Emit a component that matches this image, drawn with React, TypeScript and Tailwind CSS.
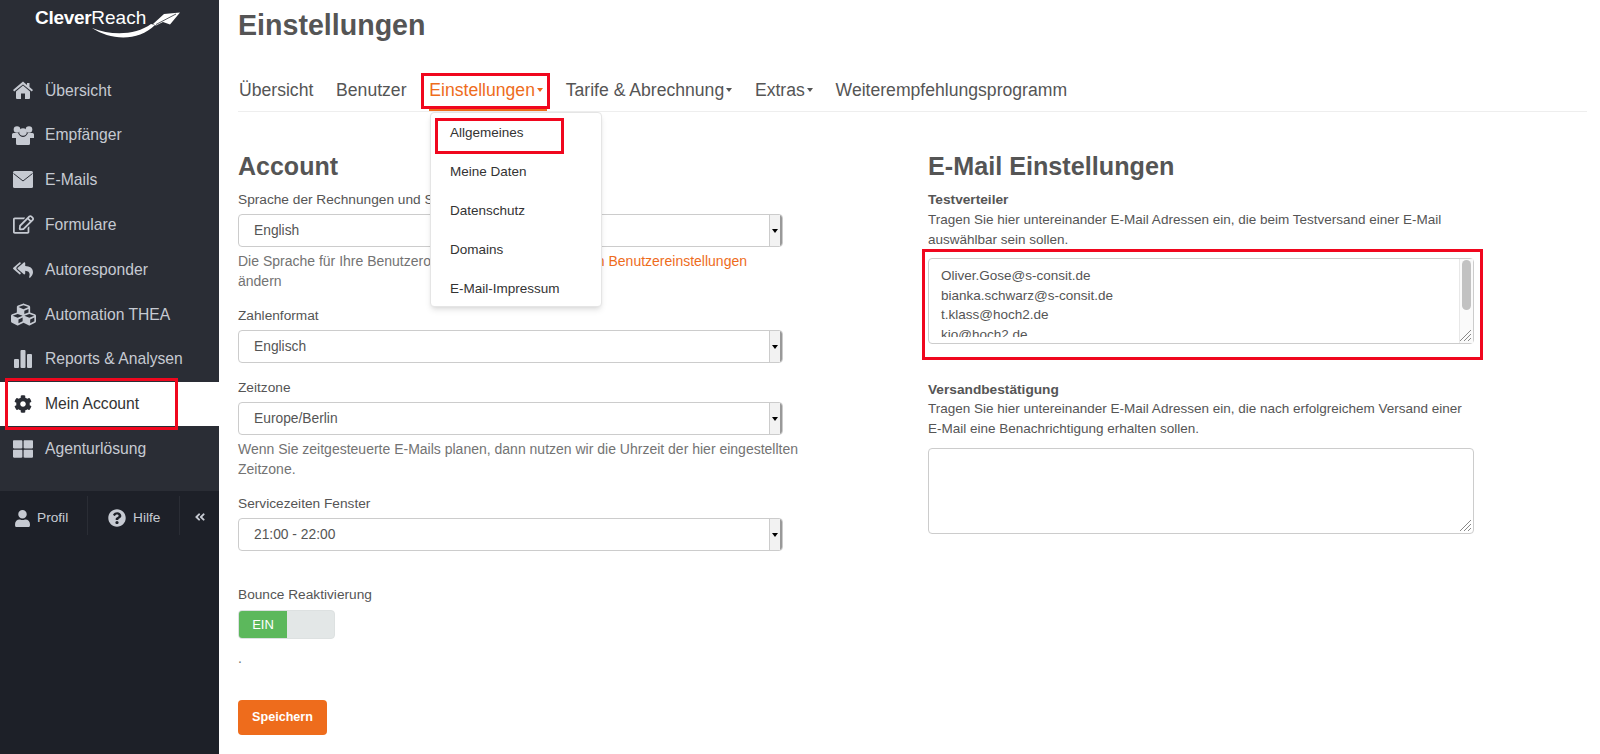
import { FaRegEdit, FaReplyAll, FaCubes, FaCog, FaThLarge, FaUser, FaQuestionCircle, FaAngleDoubleLeft } from "react-icons/fa"
import type { ReactNode } from "react"

function HomeIcon() {
  return (
    <svg width="20" height="18" viewBox="0 0 20 18" fill="currentColor" aria-hidden="true">
      <path d="M10 0.5 L14 3.9 V2 H16.5 V6 L20 9 L18.8 10.6 L10 3.4 L1.2 10.6 L0 9 Z" />
      <path d="M10 4.6 L17 10.4 V17 Q17 18 16 18 H12 V12.5 H8 V18 H4 Q3 18 3 17 V10.4 Z" />
    </svg>
  )
}

function UsersIcon() {
  return (
    <svg width="22" height="19" viewBox="0 0 22 19" fill="currentColor" aria-hidden="true">
      <circle cx="5" cy="3.5" r="3.3" />
      <circle cx="17" cy="3.5" r="3.3" />
      <circle cx="11" cy="6" r="3.8" />
      <path d="M1.5 7 H6 Q8 11 11 11 Q14 11 16 7 H20.5 Q22 7 22 8.5 V12 H18 V17.5 Q18 19 16.5 19 H5.5 Q4 19 4 17.5 V12 H0 V8.5 Q0 7 1.5 7 Z" />
    </svg>
  )
}

function MailIcon() {
  return (
    <svg width="20" height="17" viewBox="0 0 20 17" aria-hidden="true">
      <rect width="20" height="17" rx="1.5" fill="currentColor" />
      <path d="M0.5 2.5 L10 10 L19.5 2.5" fill="none" stroke="#2a2d35" strokeWidth="1" />
    </svg>
  )
}

function BarsIcon() {
  return (
    <svg width="20" height="20" viewBox="0 0 20 20" fill="currentColor" aria-hidden="true">
      <rect x="1" y="10" width="5" height="9" rx="1" />
      <rect x="7.5" y="1" width="5" height="18" rx="1" />
      <rect x="14" y="5" width="5" height="14" rx="1" />
    </svg>
  )
}

const navItems = [
  { label: "Übersicht", icon: <HomeIcon /> },
  { label: "Empfänger", icon: <UsersIcon /> },
  { label: "E-Mails", icon: <MailIcon /> },
  { label: "Formulare", icon: <FaRegEdit size={21} /> },
  { label: "Autoresponder", icon: <FaReplyAll size={20} /> },
  { label: "Automation THEA", icon: <FaCubes size={25} /> },
  { label: "Reports & Analysen", icon: <BarsIcon /> },
  { label: "Mein Account", icon: <FaCog size={18} />, active: true },
  { label: "Agenturlösung", icon: <FaThLarge size={20} /> },
]

const menuItems = ["Allgemeines", "Meine Daten", "Datenschutz", "Domains", "E-Mail-Impressum"]

function Logo() {
  return (
    <div className="relative h-[53px] pt-[7px] pl-[35px] text-white">
      <span className="text-[19px] leading-[22px] tracking-[-0.3px] font-bold">Clever</span>
      <span className="text-[19px] leading-[22px] font-light">Reach</span>
      <svg className="absolute left-[90px] top-[9px]" width="92" height="30" viewBox="0 0 92 30" fill="white" aria-hidden="true">
        <path d="M2 19 C 22 27, 46 26, 61 15 L 65 16 C 48 33, 20 31, 2 19 Z" />
        <path d="M63 15 L 74 5 L 90 3.5 L 80 15.5 L 73 13 L 66 16.5 Z" />
        <path d="M66 15.5 L 86 5" stroke="#2a2d35" strokeWidth="0.8" fill="none" />
      </svg>
    </div>
  )
}

function Sidebar() {
  return (
    <aside className="flex w-[219px] shrink-0 flex-col bg-[#2a2d35]">
      <Logo />
      <nav className="mt-[15px] flex flex-col">
        {navItems.map((item) => (
          <div key={item.label} className="relative">
            <a className={`flex h-[44.8px] items-center text-[15.7px] ${item.active ? "bg-white text-[#333]" : "text-[#c6cad2]"}`}>
              <span className={`flex w-[45px] justify-center pl-[1px] ${item.active ? "text-[#2a2d35]" : "text-[#c6cad2]"}`}>{item.icon}</span>
              {item.label}
            </a>
            {item.active && <div className="absolute top-[-4px] left-[5px] h-[52px] w-[173px] border-[3px] border-[#f0071e]" />}
          </div>
        ))}
      </nav>
      <div className="mt-[20px] flex h-[263px] items-start bg-[#1d2028] pt-[5px] text-[13.7px] text-[#c6cad2]">
        <div className="flex h-[39px] w-[88px] items-center gap-[6px] border-r border-[#2a2d35] pt-[5px] pl-[14px]">
          <FaUser size={17} />
          Profil
        </div>
        <div className="flex h-[39px] w-[92px] items-center gap-[7px] border-r border-[#2a2d35] pt-[5px] pl-[20px]">
          <FaQuestionCircle size={18} />
          Hilfe
        </div>
        <div className="flex h-[39px] flex-1 items-center justify-center pt-[3px]">
          <FaAngleDoubleLeft size={12} />
        </div>
      </div>
    </aside>
  )
}

function FakeSelect({ value }: { value: string }) {
  return (
    <div className="flex h-[33px] items-stretch overflow-hidden rounded-[4px] border border-[#ccc] bg-white">
      <div className="flex flex-1 items-center pt-[1px] pl-[15px] text-[13.8px] text-[#555]">{value}</div>
      <div className="flex w-[13px] items-center justify-center border-l border-[#ccc] border-r-2 border-r-[#999] bg-[#f2f2f2]">
        <div className="h-0 w-0 border-x-[3px] border-t-[4px] border-x-transparent border-t-black" />
      </div>
    </div>
  )
}

function Label({ children, className = "" }: { children: ReactNode; className?: string }) {
  return <div className={`text-[13.7px] leading-[20px] text-[#555] ${className}`}>{children}</div>
}

function Help({ children }: { children: ReactNode }) {
  return <p className="mt-[5px] text-[14px] leading-[19.5px] whitespace-nowrap text-[#737373]">{children}</p>
}

function AccountColumn() {
  return (
    <section className="w-[545px] shrink-0">
      <h2 className="mt-[37px] text-[25px] leading-[34px] font-bold text-[#555]">Account</h2>
      <Label className="mt-[7px] mb-[4px]">Sprache der Rechnungen und Systemnachrichten</Label>
      <FakeSelect value="English" />
      <Help>
        Die Sprache für Ihre Benutzeroberfläche können Sie in{" "}
        <a className="text-[#ee6c1c]">den Benutzereinstellungen</a>
        <br />
        ändern
      </Help>
      <Label className="mt-[15px] mb-[4px]">Zahlenformat</Label>
      <FakeSelect value="Englisch" />
      <Label className="mt-[15px] mb-[4px]">Zeitzone</Label>
      <FakeSelect value="Europe/Berlin" />
      <Help>
        Wenn Sie zeitgesteuerte E-Mails planen, dann nutzen wir die Uhrzeit der hier eingestellten
        <br />
        Zeitzone.
      </Help>
      <Label className="mt-[15px] mb-[4px]">Servicezeiten Fenster</Label>
      <FakeSelect value="21:00 - 22:00" />
      <Label className="mt-[34px] mb-[5px]">Bounce Reaktivierung</Label>
      <div className="flex h-[29px] w-[97px] overflow-hidden rounded-[4px] border border-[#dde1e1] bg-[#e3e7e7]">
        <div className="flex w-[48px] items-center justify-center bg-[#5cb85c] text-[13px] text-white">EIN</div>
      </div>
      <p className="mt-[9px] text-[14px] leading-[20px] text-[#737373]">.</p>
      <button className="mt-[32px] h-[35px] w-[89px] rounded-[4px] bg-[#ee6c1c] text-[12.6px] font-bold text-white">Speichern</button>
    </section>
  )
}

function EmailColumn() {
  return (
    <section className="ml-[145px] w-[546px] shrink-0">
      <h2 className="mt-[37px] text-[25.2px] leading-[34px] font-bold text-[#555]">E-Mail Einstellungen</h2>
      <Label className="mt-[7px] font-bold">Testverteiler</Label>
      <p className="text-[13.5px] leading-[19.5px] text-[#555]">
        Tragen Sie hier untereinander E-Mail Adressen ein, die beim Testversand einer E-Mail
        <br />
        auswählbar sein sollen.
      </p>
      <div className="relative mt-[9px]">
        <div className="relative h-[86px] rounded-[4px] border border-[#ccc] bg-white">
          <div className="h-[78px] overflow-hidden pt-[7px] pl-[12px] text-[13.5px] leading-[19.5px] text-[#555]">
            <div>Oliver.Gose@s-consit.de</div>
            <div>bianka.schwarz@s-consit.de</div>
            <div>t.klass@hoch2.de</div>
            <div>kio@hoch2.de</div>
          </div>
          <div className="absolute top-0 right-0 bottom-0 w-[14px] border-l border-[#e8e8e8] bg-[#fafafa]">
            <div className="mx-auto mt-[1px] h-[50px] w-[9px] rounded-full bg-[#c2c2c2]" />
          </div>
          <ResizeGrip />
        </div>
        <div className="absolute top-[-9px] left-[-6px] h-[111px] w-[561px] border-[3px] border-[#f0071e]" />
      </div>
      <Label className="mt-[36px] -mb-[1px] font-bold">Versandbestätigung</Label>
      <p className="text-[13.5px] leading-[19.5px] text-[#555]">
        Tragen Sie hier untereinander E-Mail Adressen ein, die nach erfolgreichem Versand einer
        <br />
        E-Mail eine Benachrichtigung erhalten sollen.
      </p>
      <div className="relative mt-[10px] h-[86px] rounded-[4px] border border-[#ccc] bg-white">
        <ResizeGrip />
      </div>
    </section>
  )
}

function ResizeGrip() {
  return (
    <svg className="absolute right-[1px] bottom-[1px]" width="13" height="13" viewBox="0 0 13 13" stroke="#888" strokeWidth="1" aria-hidden="true">
      <path d="M1 12 L12 1 M5 12 L12 5 M9 12 L12 9" />
    </svg>
  )
}

function Tabs() {
  return (
    <nav className="mt-[20px] flex h-[42px] items-start border-b border-[#eee] text-[17.6px] leading-[40px] text-[#555]">
      <a className="pr-[11.4px] pl-[1px]">Übersicht</a>
      <a className="px-[11.4px]">Benutzer</a>
      <div className="relative px-[11.4px]">
        <a className="flex items-center gap-[2px] text-[#ee6c1c]">
          Einstellungen
          <span className="h-0 w-0 border-x-[3.5px] border-t-[4px] border-x-transparent border-t-[#ee6c1c]" />
        </a>
        <div className="absolute top-[39px] right-[7px] left-[11px] h-[2px] bg-[#ee6c1c]" />
        <div className="absolute top-[3px] left-[3px] h-[36px] w-[129px] border-[3px] border-[#f0071e]" />
        <div className="absolute top-[42px] left-[12px] z-10 h-[195px] w-[172px] rounded-[4px] border border-[#e5e5e5] bg-white shadow-md">
          {menuItems.map((item) => (
            <div key={item} className="h-[39px] pl-[19px] text-[13.5px] leading-[39px] text-[#333]">
              {item}
            </div>
          ))}
          <div className="absolute top-[5px] left-[4px] h-[36px] w-[129px] border-[3px] border-[#f0071e]" />
        </div>
      </div>
      <a className="flex items-center gap-[2px] px-[11.4px]">
        Tarife &amp; Abrechnung
        <span className="h-0 w-0 border-x-[3.5px] border-t-[4px] border-x-transparent border-t-[#555]" />
      </a>
      <a className="flex items-center gap-[2px] px-[11.4px]">
        Extras
        <span className="h-0 w-0 border-x-[3.5px] border-t-[4px] border-x-transparent border-t-[#555]" />
      </a>
      <a className="px-[11.4px]">Weiterempfehlungsprogramm</a>
    </nav>
  )
}

export default function App() {
  return (
    <div className="flex h-screen overflow-hidden bg-white font-['Liberation_Sans',Arial,sans-serif]">
      <Sidebar />
      <main className="min-w-0 flex-1 pr-[13px] pl-[19px]">
        <h1 className="flex h-[50px] items-center text-[28.6px] font-bold text-[#555]">Einstellungen</h1>
        <Tabs />
        <div className="flex">
          <AccountColumn />
          <EmailColumn />
        </div>
      </main>
    </div>
  )
}
